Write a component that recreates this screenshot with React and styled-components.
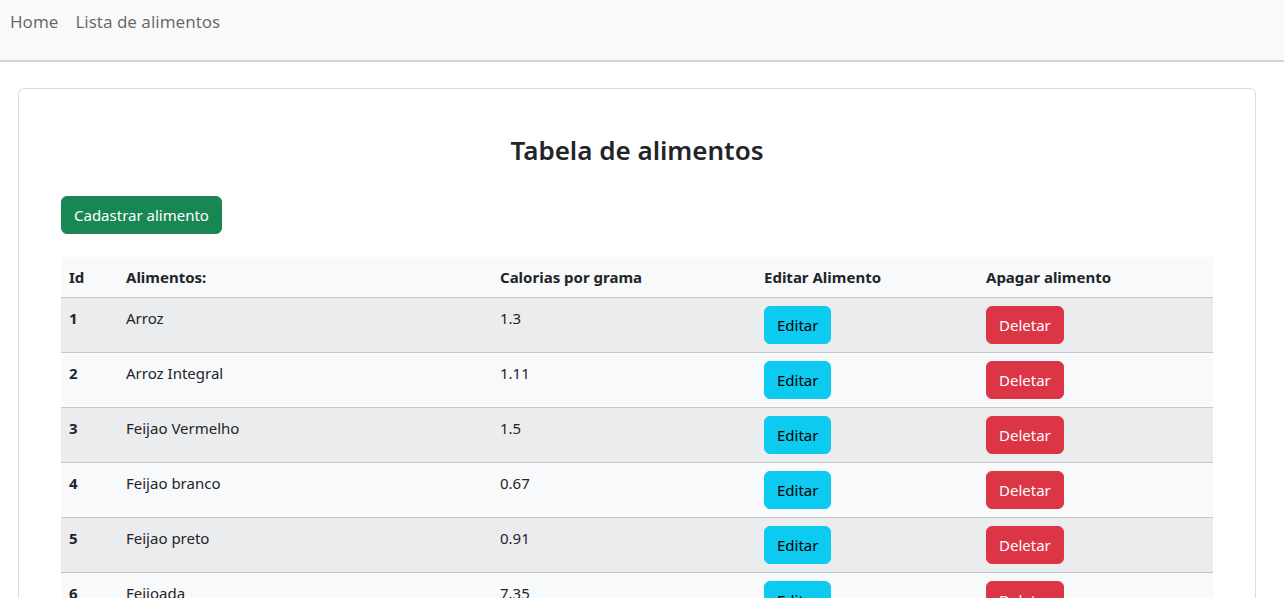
import styled, { createGlobalStyle } from "styled-components";

const Global = createGlobalStyle`
    body {
        margin: 0;
        font-family: "Noto Sans", "Open Sans", sans-serif;
        font-size: 16px;
        line-height: 1.5;
        color: #212529;
        background: #fff;
    }
`;

const Navbar = styled.nav`
    height: 62px;
    display: flex;
    align-items: flex-start;
    gap: 17px;
    padding: 10px 10px 0;
    box-sizing: border-box;
    background: #f8f9fa;
    border-bottom: 2px solid #d4d4d4;
`;

const NavLink = styled.a`
    font-size: 17px;
    color: rgba(0, 0, 0, 0.6);
    text-decoration: none;
    line-height: 24px;
`;

const Page = styled.main`
    padding: 26px 28px 0 18px;
`;

const Card = styled.section`
    border: 1px solid #dcdcdc;
    border-radius: 6px;
    padding: 46px 42px 0;
    min-height: 600px;
`;

const Title = styled.h2`
    margin: 0 0 30px;
    text-align: center;
    font-size: 26px;
    font-weight: 600;
    line-height: 1.2;
`;

const Button = styled.button`
    font-family: inherit;
    font-size: 15px;
    line-height: 24px;
    padding: 6px 12px;
    border: 1px solid ${p => p.bg};
    border-radius: 6px;
    background: ${p => p.bg};
    color: ${p => p.fg};
    cursor: pointer;
    vertical-align: top;
`;

const Table = styled.table`
    width: 100%;
    margin-top: 23px;
    border-collapse: collapse;
    table-layout: fixed;
    font-size: 15px;
`;

const Head = styled.th`
    text-align: left;
    padding: 8px;
    font-weight: 700;
    background: #f8f9fa;
    border-bottom: 1px solid #c6c7c8;
    line-height: 24px;
    vertical-align: bottom;
    width: ${p => p.w || "auto"};
`;

const Row = styled.tr`
    background: ${p => (p.odd ? "#ebecee" : "#f8f9fa")};
    border-bottom: 1px solid #c6c7c8;
`;

const Cell = styled.td`
    padding: 8px;
    line-height: 24px;
    vertical-align: top;
    font-weight: ${p => (p.bold ? 700 : 400)};
`;

const foods = [
    [1, "Arroz", "1.3"],
    [2, "Arroz Integral", "1.11"],
    [3, "Feijao Vermelho", "1.5"],
    [4, "Feijao branco", "0.67"],
    [5, "Feijao preto", "0.91"],
    [6, "Feijoada", "7.35"],
];

export default function App() {
    return (
        <>
            <Global />
            <Navbar>
                <NavLink href="#">Home</NavLink>
                <NavLink href="#">Lista de alimentos</NavLink>
            </Navbar>
            <Page>
                <Card>
                    <Title>Tabela de alimentos</Title>
                    <Button bg="#198754" fg="#fff">Cadastrar alimento</Button>
                    <Table>
                        <thead>
                            <tr>
                                <Head w="41px">Id</Head>
                                <Head w="358px">Alimentos:</Head>
                                <Head w="248px">Calorias por grama</Head>
                                <Head w="206px">Editar Alimento</Head>
                                <Head>Apagar alimento</Head>
                            </tr>
                        </thead>
                        <tbody>
                            {foods.map(([id, name, cal]) => (
                                <Row key={id} odd={id % 2 === 1}>
                                    <Cell bold>{id}</Cell>
                                    <Cell>{name}</Cell>
                                    <Cell>{cal}</Cell>
                                    <Cell>
                                        <Button bg="#0dcaf0" fg="#000">Editar</Button>
                                    </Cell>
                                    <Cell>
                                        <Button bg="#dc3545" fg="#fff">Deletar</Button>
                                    </Cell>
                                </Row>
                            ))}
                        </tbody>
                    </Table>
                </Card>
            </Page>
        </>
    );
}
